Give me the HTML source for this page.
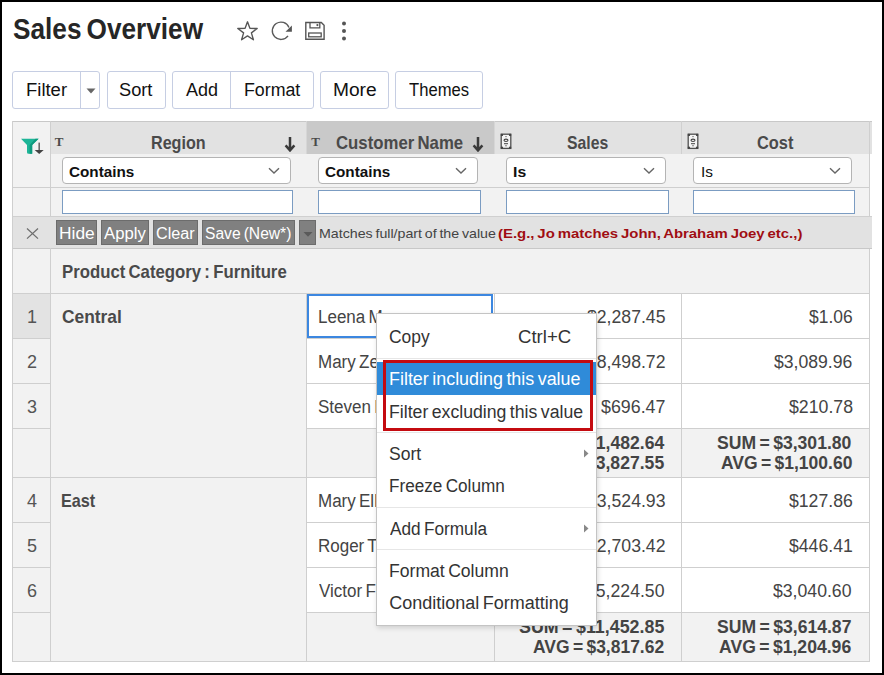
<!DOCTYPE html>
<html><head><meta charset="utf-8"><style>
html,body{margin:0;padding:0;}
body{width:884px;height:675px;overflow:hidden;position:relative;background:#fff;font-family:"Liberation Sans",sans-serif;}
.b{position:absolute;}
.t{position:absolute;white-space:pre;transform-origin:0 0;}
#frame{position:absolute;left:0;top:0;width:884px;height:675px;border:2px solid #000;box-sizing:border-box;z-index:50;pointer-events:none}
#menu{position:absolute;left:0;top:0;z-index:10}
</style></head><body>
<div class="b" style="left:12px;top:71px;width:88px;height:38px;border:1px solid #c6cee3;border-radius:3px;background:#fff;box-sizing:border-box"></div><div class="b" style="left:80px;top:72px;width:1px;height:36px;background:#c6cee3"></div><div class="b" style="left:107px;top:71px;width:58.5px;height:38px;border:1px solid #c6cee3;border-radius:3px;background:#fff;box-sizing:border-box"></div><div class="b" style="left:172px;top:71px;width:141.5px;height:38px;border:1px solid #c6cee3;border-radius:3px;background:#fff;box-sizing:border-box"></div><div class="b" style="left:230px;top:72px;width:1px;height:36px;background:#c6cee3"></div><div class="b" style="left:320px;top:71px;width:68.5px;height:38px;border:1px solid #c6cee3;border-radius:3px;background:#fff;box-sizing:border-box"></div><div class="b" style="left:395px;top:71px;width:87.5px;height:38px;border:1px solid #c6cee3;border-radius:3px;background:#fff;box-sizing:border-box"></div><div class="b" style="left:12px;top:121px;width:860px;height:33px;background:#e2e2e2"></div><div class="b" style="left:12px;top:121px;width:38px;height:33px;background:#f2f2f2"></div><div class="b" style="left:306px;top:121px;width:188px;height:33px;background:#c9c9c9"></div><div class="b" style="left:12px;top:154px;width:857px;height:94px;background:#f2f2f2"></div><div class="b" style="left:12px;top:216px;width:860px;height:32px;background:#e2e2e2"></div><div class="b" style="left:12px;top:248px;width:857px;height:413px;background:#f2f2f2"></div><div class="b" style="left:306px;top:293px;width:563px;height:45px;background:#fff"></div><div class="b" style="left:306px;top:338px;width:563px;height:45px;background:#fff"></div><div class="b" style="left:306px;top:383px;width:563px;height:45px;background:#fff"></div><div class="b" style="left:306px;top:477px;width:563px;height:45px;background:#fff"></div><div class="b" style="left:306px;top:522px;width:563px;height:45px;background:#fff"></div><div class="b" style="left:306px;top:567px;width:563px;height:45px;background:#fff"></div><div class="b" style="left:12px;top:293px;width:38px;height:45px;background:#e3e3e3"></div><div class="b" style="left:12px;top:121px;width:860px;height:1px;background:#c8c8c8"></div><div class="b" style="left:12px;top:187px;width:857px;height:1px;background:#cfcfcf"></div><div class="b" style="left:12px;top:216px;width:860px;height:1px;background:#d0d0d0"></div><div class="b" style="left:12px;top:248px;width:860px;height:1px;background:#c8c8c8"></div><div class="b" style="left:12px;top:293px;width:857px;height:1px;background:#cfcfcf"></div><div class="b" style="left:12px;top:338px;width:38px;height:1px;background:#cfcfcf"></div><div class="b" style="left:306px;top:338px;width:563px;height:1px;background:#cfcfcf"></div><div class="b" style="left:12px;top:383px;width:38px;height:1px;background:#cfcfcf"></div><div class="b" style="left:306px;top:383px;width:563px;height:1px;background:#cfcfcf"></div><div class="b" style="left:12px;top:428px;width:38px;height:1px;background:#cfcfcf"></div><div class="b" style="left:306px;top:428px;width:563px;height:1px;background:#cfcfcf"></div><div class="b" style="left:12px;top:477px;width:857px;height:1px;background:#cfcfcf"></div><div class="b" style="left:12px;top:522px;width:38px;height:1px;background:#cfcfcf"></div><div class="b" style="left:306px;top:522px;width:563px;height:1px;background:#cfcfcf"></div><div class="b" style="left:12px;top:567px;width:38px;height:1px;background:#cfcfcf"></div><div class="b" style="left:306px;top:567px;width:563px;height:1px;background:#cfcfcf"></div><div class="b" style="left:12px;top:612px;width:38px;height:1px;background:#cfcfcf"></div><div class="b" style="left:306px;top:612px;width:563px;height:1px;background:#cfcfcf"></div><div class="b" style="left:12px;top:661px;width:858px;height:1px;background:#cfcfcf"></div><div class="b" style="left:12px;top:121px;width:1px;height:541px;background:#cfcfcf"></div><div class="b" style="left:50px;top:121px;width:1px;height:95px;background:#cfcfcf"></div><div class="b" style="left:50px;top:248px;width:1px;height:413px;background:#cfcfcf"></div><div class="b" style="left:306px;top:293px;width:1px;height:368px;background:#cfcfcf"></div><div class="b" style="left:494px;top:293px;width:1px;height:368px;background:#cfcfcf"></div><div class="b" style="left:681px;top:293px;width:1px;height:368px;background:#cfcfcf"></div><div class="b" style="left:869px;top:121px;width:1px;height:95px;background:#cfcfcf"></div><div class="b" style="left:869px;top:249px;width:1px;height:412px;background:#cfcfcf"></div><div class="b" style="left:306px;top:121px;width:1px;height:33px;background:#d6d6d6"></div><div class="b" style="left:494px;top:121px;width:1px;height:33px;background:#d6d6d6"></div><div class="b" style="left:681px;top:121px;width:1px;height:33px;background:#d0d0d0"></div><div class="b" style="left:62px;top:157px;width:229px;height:27px;border:1px solid #b4b4b4;border-radius:4px;background:#fff;box-sizing:border-box"></div><div class="b" style="left:62px;top:190px;width:231px;height:24px;border:1px solid #7b9cc2;background:#fff;box-sizing:border-box"></div><div class="b" style="left:318px;top:157px;width:160px;height:27px;border:1px solid #b4b4b4;border-radius:4px;background:#fff;box-sizing:border-box"></div><div class="b" style="left:318px;top:190px;width:163px;height:24px;border:1px solid #7b9cc2;background:#fff;box-sizing:border-box"></div><div class="b" style="left:506px;top:157px;width:160px;height:27px;border:1px solid #b4b4b4;border-radius:4px;background:#fff;box-sizing:border-box"></div><div class="b" style="left:506px;top:190px;width:163px;height:24px;border:1px solid #7b9cc2;background:#fff;box-sizing:border-box"></div><div class="b" style="left:693px;top:157px;width:159px;height:27px;border:1px solid #b4b4b4;border-radius:4px;background:#fff;box-sizing:border-box"></div><div class="b" style="left:693px;top:190px;width:162px;height:24px;border:1px solid #7b9cc2;background:#fff;box-sizing:border-box"></div><div class="b" style="left:56px;top:220px;width:41px;height:25px;background:#808080;border:1px solid #6c6c6c;box-sizing:border-box"></div><div class="b" style="left:101px;top:220px;width:48px;height:25px;background:#808080;border:1px solid #6c6c6c;box-sizing:border-box"></div><div class="b" style="left:153px;top:220px;width:45px;height:25px;background:#808080;border:1px solid #6c6c6c;box-sizing:border-box"></div><div class="b" style="left:202px;top:220px;width:92.60000000000002px;height:25px;background:#808080;border:1px solid #6c6c6c;box-sizing:border-box"></div><div class="b" style="left:299px;top:220px;width:16.80000000000001px;height:25px;background:#808080;border:1px solid #6c6c6c;box-sizing:border-box"></div><div class="b" style="left:307px;top:294px;width:186px;height:44px;border:2px solid #3c87e0;box-sizing:border-box"></div>
<svg class="b" style="left:267.9px;top:167px" width="12" height="8" viewBox="0 0 12 8"><path d="M1 1.2 L6 6 L11 1.2" fill="none" stroke="#666" stroke-width="1.4"/></svg><svg class="b" style="left:455px;top:167px" width="12" height="8" viewBox="0 0 12 8"><path d="M1 1.2 L6 6 L11 1.2" fill="none" stroke="#666" stroke-width="1.4"/></svg><svg class="b" style="left:643.2px;top:167px" width="12" height="8" viewBox="0 0 12 8"><path d="M1 1.2 L6 6 L11 1.2" fill="none" stroke="#666" stroke-width="1.4"/></svg><svg class="b" style="left:829px;top:167px" width="12" height="8" viewBox="0 0 12 8"><path d="M1 1.2 L6 6 L11 1.2" fill="none" stroke="#666" stroke-width="1.4"/></svg><svg class="b" style="left:25px;top:227px" width="15" height="14" viewBox="0 0 15 14"><path d="M2 1.5 L13 11.6 M13 1.5 L2 11.6" stroke="#6e6e6e" stroke-width="1.25"/></svg><svg class="b" style="left:86px;top:88px" width="10" height="6" viewBox="0 0 10 6"><path d="M0.5 0.5 L9.5 0.5 L5 5.5 Z" fill="#666"/></svg><svg class="b" style="left:302.5px;top:232px" width="10" height="5" viewBox="0 0 10 5"><path d="M0.5 0 L9.5 0 L5 4.8 Z" fill="#5a5a5a"/></svg><svg class="b" style="left:284.4px;top:137px" width="12" height="15" viewBox="0 0 12 15"><path d="M6 0 L6 13 M1.6 8.4 L6 13.4 L10.4 8.4" fill="none" stroke="#3a3a3a" stroke-width="2.5"/></svg><svg class="b" style="left:472.3px;top:137px" width="12" height="15" viewBox="0 0 12 15"><path d="M6 0 L6 13 M1.6 8.4 L6 13.4 L10.4 8.4" fill="none" stroke="#3a3a3a" stroke-width="2.5"/></svg><div class="t" style="left:54.7px;top:135px;font-family:'Liberation Serif';font-weight:700;font-size:13px;line-height:13px;color:#4a4a4a">T</div><div class="t" style="left:311.3px;top:135px;font-family:'Liberation Serif';font-weight:700;font-size:13px;line-height:13px;color:#4a4a4a">T</div><svg class="b" style="left:500px;top:133px" width="12" height="17" viewBox="0 0 12 17"><rect x="1.2" y="1.2" width="9.6" height="14.2" fill="#f4f4f4" stroke="#505050" stroke-width="1.3"/><circle cx="1.9" cy="1.9" r="1.2" fill="#444"/><circle cx="10.1" cy="1.9" r="1.2" fill="#444"/><circle cx="1.9" cy="14.7" r="1.2" fill="#444"/><circle cx="10.1" cy="14.7" r="1.2" fill="#444"/><circle cx="6" cy="3.6" r="0.7" fill="#555"/><ellipse cx="6" cy="7.3" rx="2" ry="1.2" fill="none" stroke="#444" stroke-width="1.1"/><rect x="4" y="10.2" width="4" height="1" fill="#444"/><circle cx="6" cy="12.7" r="0.7" fill="#555"/></svg><svg class="b" style="left:687.3px;top:133px" width="12" height="17" viewBox="0 0 12 17"><rect x="1.2" y="1.2" width="9.6" height="14.2" fill="#f4f4f4" stroke="#505050" stroke-width="1.3"/><circle cx="1.9" cy="1.9" r="1.2" fill="#444"/><circle cx="10.1" cy="1.9" r="1.2" fill="#444"/><circle cx="1.9" cy="14.7" r="1.2" fill="#444"/><circle cx="10.1" cy="14.7" r="1.2" fill="#444"/><circle cx="6" cy="3.6" r="0.7" fill="#555"/><ellipse cx="6" cy="7.3" rx="2" ry="1.2" fill="none" stroke="#444" stroke-width="1.1"/><rect x="4" y="10.2" width="4" height="1" fill="#444"/><circle cx="6" cy="12.7" r="0.7" fill="#555"/></svg><svg class="b" style="left:16px;top:132px" width="32" height="28" viewBox="0 0 32 28"><path d="M5 6.8 H22.6 L16.2 12.9 V21.8 H12.5 Q11 21.8 11 20.3 V12.9 Z" fill="#1db597"/><path d="M22.6 6.8 L16.2 12.9 V21.8 H13.6 V12.9 L19.5 6.8 Z" fill="#0f9a7e"/><rect x="22.4" y="10.6" width="1.6" height="8" fill="#6a6a6a"/><path d="M18.7 17.9 H27.7 L23.2 21.9 Z" fill="#444"/></svg><svg class="b" style="left:236px;top:20px" width="23" height="22" viewBox="0 0 23 22"><path d="M11.5 1.8 L13.9 8.3 L21.2 8.5 L15.4 12.9 L17.4 19.8 L11.5 15.9 L5.6 19.8 L7.6 12.9 L1.8 8.5 L9.1 8.3 Z" fill="none" stroke="#555" stroke-width="1.35" stroke-linejoin="round"/></svg><svg class="b" style="left:266px;top:16px" width="64" height="30" viewBox="0 0 64 30"><path d="M22.03 19.89 A8.7 8.7 0 1 1 23.0 11.4" fill="none" stroke="#5a5a5a" stroke-width="1.3"/><path d="M25.9 9.6 V15.7 H19.5 Z" fill="#555"/><path d="M39.8 6.5 H55.3 L58.1 9.3 V23.2 H39.8 Z" fill="none" stroke="#555" stroke-width="1.4"/><path d="M44 6.5 V11.8 H53.8 V6.5" fill="none" stroke="#555" stroke-width="1.3"/><circle cx="51.4" cy="9.1" r="1.1" fill="#555"/><rect x="42.7" y="17" width="12.5" height="3.8" fill="none" stroke="#555" stroke-width="1.3"/></svg><svg class="b" style="left:341px;top:21px" width="6" height="20" viewBox="0 0 6 20"><circle cx="3" cy="2.6" r="2" fill="#555"/><circle cx="3" cy="10" r="2" fill="#555"/><circle cx="3" cy="17.4" r="2" fill="#555"/></svg>
<div class="t" style="left:12.80px;top:15px;font-size:29px;line-height:29px;font-weight:700;word-spacing:-2.47px;color:#262626;transform:scaleX(0.9033)">Sales Overview</div><div class="t" style="left:25.97px;top:81px;font-size:18px;line-height:18px;font-weight:400;word-spacing:-1.53px;color:#111;transform:scaleX(1.0256)">Filter</div><div class="t" style="left:119.39px;top:81px;font-size:18px;line-height:18px;font-weight:400;word-spacing:-1.53px;color:#111;transform:scaleX(1.0125)">Sort</div><div class="t" style="left:185.90px;top:81px;font-size:18px;line-height:18px;font-weight:400;word-spacing:-1.53px;color:#111">Add</div><div class="t" style="left:244.01px;top:81px;font-size:18px;line-height:18px;font-weight:400;word-spacing:-1.53px;color:#111;transform:scaleX(0.9875)">Format</div><div class="t" style="left:332.94px;top:81px;font-size:18px;line-height:18px;font-weight:400;word-spacing:-1.53px;color:#111;transform:scaleX(1.0641)">More</div><div class="t" style="left:409.00px;top:81px;font-size:18px;line-height:18px;font-weight:400;word-spacing:-1.53px;color:#111;transform:scaleX(0.9231)">Themes</div><div class="t" style="left:151.33px;top:134px;font-size:18.5px;line-height:18.5px;font-weight:700;word-spacing:-1.57px;color:#4a4a4a;transform:scaleX(0.8721)">Region</div><div class="t" style="left:336.39px;top:134px;font-size:18.5px;line-height:18.5px;font-weight:700;word-spacing:-1.57px;color:#4a4a4a;transform:scaleX(0.9065)">Customer Name</div><div class="t" style="left:567.15px;top:134px;font-size:18.5px;line-height:18.5px;font-weight:700;word-spacing:-1.57px;color:#4a4a4a;transform:scaleX(0.8511)">Sales</div><div class="t" style="left:756.72px;top:134px;font-size:18.5px;line-height:18.5px;font-weight:700;word-spacing:-1.57px;color:#4a4a4a;transform:scaleX(0.8850)">Cost</div><div class="t" style="left:68.82px;top:164px;font-size:15.5px;line-height:15.5px;font-weight:700;word-spacing:-1.32px;color:#111;transform:scaleX(0.9846)">Contains</div><div class="t" style="left:325.02px;top:164px;font-size:15.5px;line-height:15.5px;font-weight:700;word-spacing:-1.32px;color:#111;transform:scaleX(0.9846)">Contains</div><div class="t" style="left:512.78px;top:164px;font-size:15.5px;line-height:15.5px;font-weight:700;word-spacing:-1.32px;color:#111;transform:scaleX(1.0182)">Is</div><div class="t" style="left:700.51px;top:164px;font-size:15.5px;line-height:15.5px;font-weight:400;word-spacing:-1.32px;color:#111;transform:scaleX(0.9909)">Is</div><div class="t" style="left:58.62px;top:226px;font-size:16px;line-height:16px;font-weight:400;word-spacing:-1.36px;color:#fff;transform:scaleX(1.0839)">Hide</div><div class="t" style="left:104.10px;top:226px;font-size:16px;line-height:16px;font-weight:400;word-spacing:-1.36px;color:#fff;transform:scaleX(1.0425)">Apply</div><div class="t" style="left:155.69px;top:226px;font-size:16px;line-height:16px;font-weight:400;word-spacing:-1.36px;color:#fff;transform:scaleX(1.0135)">Clear</div><div class="t" style="left:204.82px;top:226px;font-size:16px;line-height:16px;font-weight:400;word-spacing:-1.36px;color:#fff;transform:scaleX(0.9770)">Save (New*)</div><div class="t" style="left:319.01px;top:227px;font-size:13px;line-height:13px;font-weight:400;word-spacing:-1.10px;color:#444;transform:scaleX(1.0931)">Matches full/part of the value</div><div class="t" style="left:498.45px;top:227px;font-size:13px;line-height:13px;font-weight:700;word-spacing:-1.10px;color:#a00d12;transform:scaleX(1.1473)">(E.g., Jo matches John, Abraham Joey etc.,)</div><div class="t" style="left:62.12px;top:262px;font-size:19px;line-height:19px;font-weight:700;word-spacing:-1.62px;color:#4a4a4a;transform:scaleX(0.8818)">Product Category : Furniture</div><div class="t" style="left:61.59px;top:307px;font-size:19px;line-height:19px;font-weight:700;word-spacing:-1.62px;color:#4a4a4a;transform:scaleX(0.9143)">Central</div><div class="t" style="left:61.25px;top:491px;font-size:19px;line-height:19px;font-weight:700;word-spacing:-1.62px;color:#4a4a4a;transform:scaleX(0.8538)">East</div><div class="t" style="left:27.10px;top:308px;font-size:18px;line-height:18px;font-weight:400;word-spacing:-1.53px;color:#555">1</div><div class="t" style="left:27.10px;top:353px;font-size:18px;line-height:18px;font-weight:400;word-spacing:-1.53px;color:#555">2</div><div class="t" style="left:27.10px;top:398px;font-size:18px;line-height:18px;font-weight:400;word-spacing:-1.53px;color:#555">3</div><div class="t" style="left:27.10px;top:492px;font-size:18px;line-height:18px;font-weight:400;word-spacing:-1.53px;color:#555">4</div><div class="t" style="left:27.10px;top:537px;font-size:18px;line-height:18px;font-weight:400;word-spacing:-1.53px;color:#555">5</div><div class="t" style="left:27.10px;top:582px;font-size:18px;line-height:18px;font-weight:400;word-spacing:-1.53px;color:#555">6</div><div class="t" style="left:318.06px;top:308px;font-size:18px;line-height:18px;font-weight:400;word-spacing:-1.53px;color:#444;transform:scaleX(0.9440)">Leena Moreno</div><div class="t" style="left:318.06px;top:353px;font-size:18px;line-height:18px;font-weight:400;word-spacing:-1.53px;color:#444;transform:scaleX(0.9440)">Mary Zeman</div><div class="t" style="left:318.06px;top:398px;font-size:18px;line-height:18px;font-weight:400;word-spacing:-1.53px;color:#444;transform:scaleX(0.9440)">Steven Rose</div><div class="t" style="left:318.06px;top:492px;font-size:18px;line-height:18px;font-weight:400;word-spacing:-1.53px;color:#444;transform:scaleX(0.9440)">Mary Ellison</div><div class="t" style="left:318.06px;top:537px;font-size:18px;line-height:18px;font-weight:400;word-spacing:-1.53px;color:#444;transform:scaleX(0.9440)">Roger Tucker</div><div class="t" style="left:319.00px;top:582px;font-size:18px;line-height:18px;font-weight:400;word-spacing:-1.53px;color:#444;transform:scaleX(0.9440)">Victor Ferro</div><div class="t" style="left:586.97px;top:308px;font-size:18px;line-height:18px;font-weight:400;word-spacing:-1.53px;color:#444;transform:scaleX(0.9801)">$2,287.45</div><div class="t" style="left:808.90px;top:308px;font-size:18px;line-height:18px;font-weight:400;word-spacing:-1.53px;color:#444;transform:scaleX(0.9682)">$1.06</div><div class="t" style="left:586.97px;top:353px;font-size:18px;line-height:18px;font-weight:400;word-spacing:-1.53px;color:#444;transform:scaleX(0.9801)">$8,498.72</div><div class="t" style="left:774.30px;top:353px;font-size:18px;line-height:18px;font-weight:400;word-spacing:-1.53px;color:#444;transform:scaleX(0.9772)">$3,089.96</div><div class="t" style="left:601.00px;top:398px;font-size:18px;line-height:18px;font-weight:400;word-spacing:-1.53px;color:#444;transform:scaleX(0.9906)">$696.47</div><div class="t" style="left:788.50px;top:398px;font-size:18px;line-height:18px;font-weight:400;word-spacing:-1.53px;color:#444;transform:scaleX(0.9844)">$210.78</div><div class="t" style="left:586.97px;top:492px;font-size:18px;line-height:18px;font-weight:400;word-spacing:-1.53px;color:#444;transform:scaleX(0.9801)">$3,524.93</div><div class="t" style="left:788.77px;top:492px;font-size:18px;line-height:18px;font-weight:400;word-spacing:-1.53px;color:#444;transform:scaleX(0.9801)">$127.86</div><div class="t" style="left:586.97px;top:537px;font-size:18px;line-height:18px;font-weight:400;word-spacing:-1.53px;color:#444;transform:scaleX(0.9801)">$2,703.42</div><div class="t" style="left:788.77px;top:537px;font-size:18px;line-height:18px;font-weight:400;word-spacing:-1.53px;color:#444;transform:scaleX(0.9801)">$446.41</div><div class="t" style="left:585.99px;top:582px;font-size:18px;line-height:18px;font-weight:400;word-spacing:-1.53px;color:#444;transform:scaleX(0.9801)">$5,224.50</div><div class="t" style="left:773.09px;top:582px;font-size:18px;line-height:18px;font-weight:400;word-spacing:-1.53px;color:#444;transform:scaleX(0.9801)">$3,040.60</div><div class="t" style="left:520.58px;top:434px;font-size:18.5px;line-height:18.5px;font-weight:700;word-spacing:-1.57px;color:#444;transform:scaleX(0.9511)">SUM = $11,482.64</div><div class="t" style="left:531.99px;top:454px;font-size:18.5px;line-height:18.5px;font-weight:700;word-spacing:-1.57px;color:#444;transform:scaleX(0.9511)">AVG = $3,827.55</div><div class="t" style="left:717.15px;top:434px;font-size:18.5px;line-height:18.5px;font-weight:700;word-spacing:-1.57px;color:#444;transform:scaleX(0.9507)">SUM = $3,301.80</div><div class="t" style="left:720.75px;top:454px;font-size:18.5px;line-height:18.5px;font-weight:700;word-spacing:-1.57px;color:#444;transform:scaleX(0.9453)">AVG = $1,100.60</div><div class="t" style="left:519.43px;top:618px;font-size:18.5px;line-height:18.5px;font-weight:700;word-spacing:-1.57px;color:#444;transform:scaleX(0.9651)">SUM = $11,452.85</div><div class="t" style="left:533.06px;top:638px;font-size:18.5px;line-height:18.5px;font-weight:700;word-spacing:-1.57px;color:#444;transform:scaleX(0.9435)">AVG = $3,817.62</div><div class="t" style="left:717.09px;top:618px;font-size:18.5px;line-height:18.5px;font-weight:700;word-spacing:-1.57px;color:#444;transform:scaleX(0.9511)">SUM = $3,614.87</div><div class="t" style="left:718.99px;top:638px;font-size:18.5px;line-height:18.5px;font-weight:700;word-spacing:-1.57px;color:#444;transform:scaleX(0.9511)">AVG = $1,204.96</div>
<div id="menu"><div class="b" style="left:376px;top:313px;width:221px;height:313px;background:#fff;border:1px solid #c4c4c4;box-sizing:border-box;box-shadow:1px 2px 5px rgba(0,0,0,0.15)"></div><div class="b" style="left:377px;top:362px;width:219px;height:33px;background:#2f8bd9"></div><div class="b" style="left:377px;top:358px;width:219px;height:1px;background:#e6e6e6"></div><div class="b" style="left:383px;top:360px;width:210px;height:71px;border:3px solid #c40b10;box-sizing:border-box"></div><div class="b" style="left:377px;top:432px;width:219px;height:1px;background:#e6e6e6"></div><div class="b" style="left:377px;top:507px;width:219px;height:1px;background:#e6e6e6"></div><div class="b" style="left:377px;top:549px;width:219px;height:1px;background:#e6e6e6"></div><svg class="b" style="left:583px;top:449.3px" width="7" height="9" viewBox="0 0 7 9"><path d="M1 0.5 L5.5 4.5 L1 8.5 Z" fill="#888"/></svg><svg class="b" style="left:583px;top:524.0px" width="7" height="9" viewBox="0 0 7 9"><path d="M1 0.5 L5.5 4.5 L1 8.5 Z" fill="#888"/></svg><div class="t" style="left:389.13px;top:328px;font-size:18px;line-height:18px;font-weight:400;word-spacing:-1.53px;color:#333;transform:scaleX(0.9683)">Copy</div><div class="t" style="left:517.77px;top:328px;font-size:18px;line-height:18px;font-weight:400;word-spacing:-1.53px;color:#333;transform:scaleX(1.0320)">Ctrl+C</div><div class="t" style="left:389.41px;top:370px;font-size:18px;line-height:18px;font-weight:400;word-spacing:-1.53px;color:#fff;transform:scaleX(0.9948)">Filter including this value</div><div class="t" style="left:389.42px;top:403px;font-size:18px;line-height:18px;font-weight:400;word-spacing:-1.53px;color:#333;transform:scaleX(0.9827)">Filter excluding this value</div><div class="t" style="left:389.22px;top:445px;font-size:18px;line-height:18px;font-weight:400;word-spacing:-1.53px;color:#333;transform:scaleX(0.9750)">Sort</div><div class="t" style="left:389.25px;top:477px;font-size:18px;line-height:18px;font-weight:400;word-spacing:-1.53px;color:#333;transform:scaleX(0.9525)">Freeze Column</div><div class="t" style="left:390.20px;top:520px;font-size:18px;line-height:18px;font-weight:400;word-spacing:-1.53px;color:#333;transform:scaleX(0.9559)">Add Formula</div><div class="t" style="left:389.22px;top:562px;font-size:18px;line-height:18px;font-weight:400;word-spacing:-1.53px;color:#333;transform:scaleX(0.9777)">Format Column</div><div class="t" style="left:389.20px;top:594px;font-size:18px;line-height:18px;font-weight:400;word-spacing:-1.53px;color:#333">Conditional Formatting</div></div>
<div id="frame"></div>
</body></html>
